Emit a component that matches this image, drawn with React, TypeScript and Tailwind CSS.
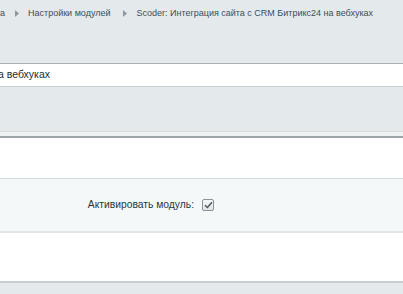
import React from "react"

const font = { fontFamily: '"Liberation Sans", Arial, sans-serif' }

function Crumb({ children }: { children: React.ReactNode }) {
  return <span className="whitespace-nowrap">{children}</span>
}

function Arrow() {
  return (
    <svg width="4" height="7" viewBox="0 0 4 7" className="shrink-0">
      <path d="M0 0 L4 3.5 L0 7 Z" fill="#8d99a1" />
    </svg>
  )
}

export default function App() {
  return (
    <div className="w-[403px] h-[294px] overflow-hidden bg-[#e4eaec] text-[#3b4650]" style={font}>
      {/* breadcrumbs */}
      <div className="h-[27px] flex items-center text-[9px] text-[#3e4d58]">
        <div className="w-[5px] flex justify-end">
          <Crumb>Настройки продукта</Crumb>
        </div>
        <div className="ml-[10px] mr-[9px]">
          <Arrow />
        </div>
        <Crumb>Настройки модулей</Crumb>
        <div className="ml-[13px] mr-[9px]">
          <Arrow />
        </div>
        <Crumb>Scoder: Интеграция сайта с CRM Битрикс24 на вебхуках</Crumb>
      </div>

      <div className="h-[36px]" />

      {/* title */}
      <div className="h-[24px] bg-white border-t border-t-[#a9b0b3] border-b border-b-[#c9cfd1] flex items-center text-[10.5px] text-[#1f2a33]">
        <div className="w-[50px] flex justify-end">
          <span className="whitespace-nowrap">Scoder: Интеграция сайта с CRM Битрикс24 на вебхуках</span>
        </div>
      </div>

      {/* tabs area */}
      <div className="h-[44px]" />
      <div className="h-[5px] bg-[#eef2f3] border-t border-t-[#d4dcdf]" />

      {/* content */}
      <div className="border-t-2 border-t-[#9da5a8] bg-white">
        <div className="h-[40px]" />
        <div className="h-[55px] bg-[#f5f8f9] border-t border-t-[#d6dde0] border-b-2 border-b-[#dfe5e8] flex items-center">
          <div className="w-[197px] pr-[3px] text-right text-[10.3px] text-[#2b353d] whitespace-nowrap">
            Активировать модуль:
          </div>
          <div className="ml-[5px] w-[12px] h-[12px] rounded-[2px] border border-[#8a949a] bg-gradient-to-b from-[#f4f6f7] to-[#dfe4e7] flex items-center justify-center">
            <svg width="9" height="8" viewBox="0 0 9 8">
              <path d="M1 4.2 L3.4 6.4 L8 1.2" fill="none" stroke="#4a555c" strokeWidth="1.4" />
            </svg>
          </div>
        </div>
        <div className="h-[48px]" />
      </div>
      <div className="border-t-2 border-t-[#c9cfd1]" />
    </div>
  )
}
